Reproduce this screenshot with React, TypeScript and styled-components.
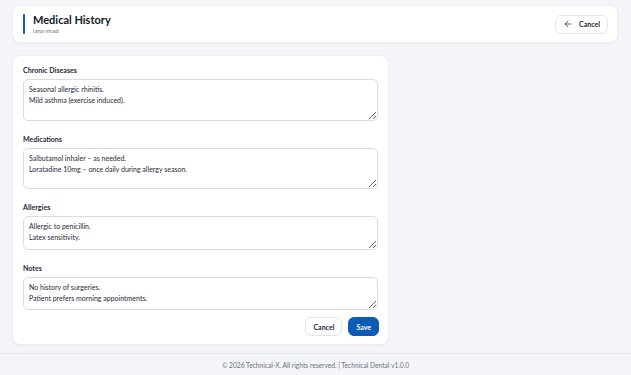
import React from "react";
import styled, { createGlobalStyle } from "styled-components";
import { ArrowLeft } from "lucide-react";

const GlobalStyle = createGlobalStyle`
  html, body {
    margin: 0;
    padding: 0;
    background: #f4f5f8;
    font-family: Lato, "Noto Sans", Arial, sans-serif;
  }
  * {
    box-sizing: border-box;
  }
`;

const Page = styled.div`
  min-height: 100vh;
  display: flex;
  flex-direction: column;
`;

const Main = styled.main`
  flex: 1;
  padding: 5px 13px 8px 12px;
  display: flex;
  flex-direction: column;
  gap: 12px;
`;

const HeaderCard = styled.header`
  height: 38px;
  display: flex;
  align-items: center;
  justify-content: space-between;
  padding: 0 9px 0 10px;
  background: #ffffff;
  border: 1px solid #eceef2;
  border-radius: 8px;
  box-shadow: 0 1px 2px rgba(16, 24, 40, 0.04);
`;

const TitleGroup = styled.div`
  display: flex;
  align-items: stretch;
  gap: 8px;
`;

const AccentBar = styled.span`
  width: 2px;
  border-radius: 1px;
  background: #0d5bb5;
`;

const TitleText = styled.div`
  display: flex;
  flex-direction: column;
  gap: 1px;
`;

const Title = styled.h1`
  margin: 0;
  font-size: 11px;
  line-height: 12px;
  font-weight: 700;
  color: #111827;
`;

const Subtitle = styled.span`
  font-size: 6px;
  line-height: 7px;
  color: #6b7280;
`;

const Button = styled.button<{ primary?: boolean }>`
  display: inline-flex;
  align-items: center;
  justify-content: center;
  gap: 6px;
  height: 19px;
  padding: 0 7px;
  font-family: inherit;
  font-size: 7px;
  font-weight: 700;
  border-radius: 6px;
  cursor: pointer;
  color: ${(p) => (p.primary ? "#ffffff" : "#1f2937")};
  background: ${(p) => (p.primary ? "#0d5bb5" : "#ffffff")};
  border: 1px solid ${(p) => (p.primary ? "#0d5bb5" : "#e2e5ea")};
`;

const HeaderButton = styled(Button)`
  width: 53px;
  & svg {
    flex-shrink: 0;
  }
`;

const FormCard = styled.form`
  width: 377px;
  display: flex;
  flex-direction: column;
  gap: 14px;
  padding: 10px 10px 8px;
  background: #ffffff;
  border: 1px solid #eceef2;
  border-radius: 8px;
  box-shadow: 0 1px 2px rgba(16, 24, 40, 0.04);
`;

const Field = styled.div`
  display: flex;
  flex-direction: column;
  gap: 3px;
`;

const Label = styled.label`
  font-size: 7.1px;
  line-height: 10px;
  font-weight: 700;
  color: #1f2937;
`;

const TextArea = styled.textarea<{ boxHeight: number }>`
  display: block;
  width: 100%;
  height: ${(p) => p.boxHeight}px;
  padding: 4px 5px;
  font-family: inherit;
  font-size: 7px;
  line-height: 11px;
  color: #1f2937;
  background: #ffffff;
  border: 1px solid #d9dde3;
  border-radius: 5px;
  resize: vertical;
  outline: none;
`;

const Actions = styled.div`
  display: flex;
  justify-content: flex-end;
  gap: 6px;
  margin: -7px -1px 0 0;
`;

const Footer = styled.footer`
  height: 22px;
  display: flex;
  align-items: center;
  justify-content: center;
  border-top: 1px solid #e6e8ec;
  font-size: 6.65px;
  color: #6b7280;
`;

const fields = [
  {
    label: "Chronic Diseases",
    value: "Seasonal allergic rhinitis.\nMild asthma (exercise induced).",
    height: 42,
  },
  {
    label: "Medications",
    value:
      "Salbutamol inhaler – as needed.\nLoratadine 10mg – once daily during allergy season.",
    height: 41,
  },
  {
    label: "Allergies",
    value: "Allergic to penicillin.\nLatex sensitivity.",
    height: 34,
  },
  {
    label: "Notes",
    value: "No history of surgeries.\nPatient prefers morning appointments.",
    height: 33,
  },
];

export default function App() {
  return (
    <Page>
      <GlobalStyle />
      <Main>
        <HeaderCard>
          <TitleGroup>
            <AccentBar />
            <TitleText>
              <Title>Medical History</Title>
              <Subtitle>lana mrad</Subtitle>
            </TitleText>
          </TitleGroup>
          <HeaderButton type="button">
            <ArrowLeft size={10} strokeWidth={1.8} />
            Cancel
          </HeaderButton>
        </HeaderCard>

        <FormCard onSubmit={(e) => e.preventDefault()}>
          {fields.map((f) => (
            <Field key={f.label}>
              <Label>{f.label}</Label>
              <TextArea boxHeight={f.height} defaultValue={f.value} />
            </Field>
          ))}
          <Actions>
            <Button type="button">Cancel</Button>
            <Button type="submit" primary>
              Save
            </Button>
          </Actions>
        </FormCard>
      </Main>
      <Footer>© 2026 Technical-X. All rights reserved. | Technical Dental v1.0.0</Footer>
    </Page>
  );
}
